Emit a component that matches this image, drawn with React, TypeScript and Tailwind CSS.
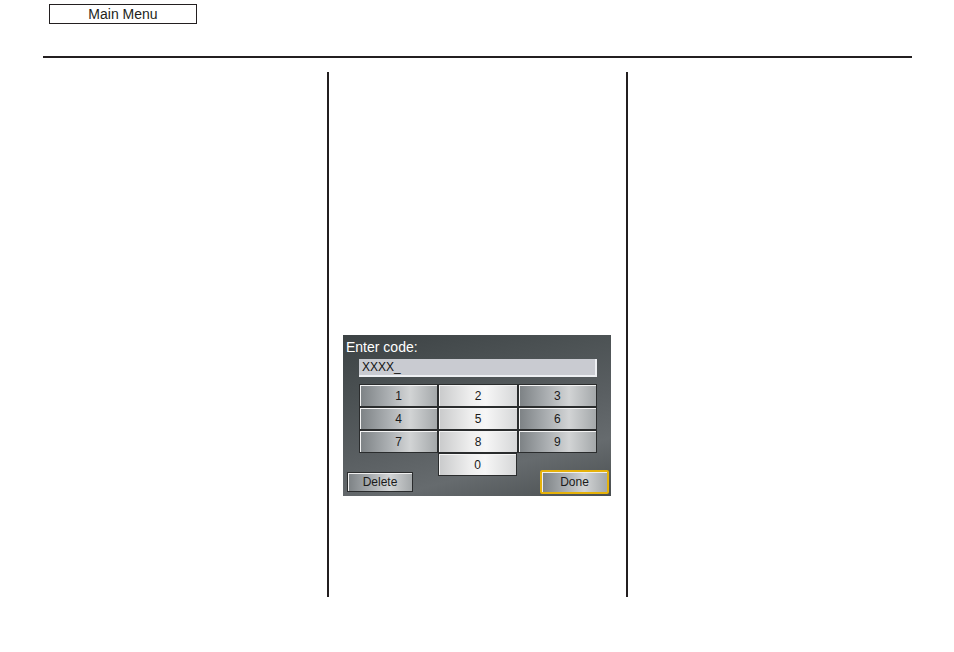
import React from 'react';

const font = { fontFamily: '"Liberation Sans", Arial, sans-serif' };

const darkKey =
  'bg-[linear-gradient(90deg,#7c8184_0%,#a9adb0_35%,#d2d4d5_65%,#a4a8aa_100%)]';
const lightKey =
  'bg-[linear-gradient(90deg,#c9cacb_0%,#eeeeee_40%,#f6f6f6_60%,#d6d7d8_100%)]';

const keys: { label: string; light: boolean }[] = [
  { label: '1', light: false },
  { label: '2', light: true },
  { label: '3', light: false },
  { label: '4', light: false },
  { label: '5', light: true },
  { label: '6', light: false },
  { label: '7', light: false },
  { label: '8', light: true },
  { label: '9', light: false },
];

const Key = ({ label, light }: { label: string; light: boolean }) => (
  <div
    className={`h-[23px] flex items-center justify-center border border-[#2a2c2d] shadow-[inset_1px_1px_0_#f4f4f4] text-[12px] text-[#1a1a1a] ${
      light ? lightKey : darkKey
    }`}
  >
    {label}
  </div>
);

const CodeScreen = () => (
  <div
    className="w-[268px] h-[161px] flex flex-col bg-[linear-gradient(165deg,#3c4244_0%,#4c5254_30%,#5a5f62_55%,#666b6e_75%,#4a4f51_100%)]"
    style={font}
  >
    <div className="pt-[4px] pl-[3px] h-[20px] text-[14px] leading-[16px] text-white">
      Enter code:
    </div>
    <div className="mt-[4px] ml-[16px] w-[238px] h-[18px] bg-[#c9cbd1] border-b-2 border-r-2 border-[#eef0f3] pl-[3px] text-[12px] leading-[17px] text-[#111]">
      XXXX_
    </div>
    <div className="mt-[7px] ml-[16px] w-[238px] grid grid-cols-3">
      {keys.map((k) => (
        <Key key={k.label} label={k.label} light={k.light} />
      ))}
    </div>
    <div className="flex items-start">
      <div
        className={`ml-[4px] mt-[19px] w-[66px] h-[20px] flex items-center justify-center border border-[#2a2c2d] shadow-[inset_1px_1px_0_#f0f0f0] text-[12px] text-[#1a1a1a] ${darkKey}`}
      >
        Delete
      </div>
      <div className="ml-[25px] w-[79px]">
        <Key label="0" light={true} />
      </div>
      <div className="ml-[23px] mt-[17px] w-[69px] h-[24px] border-2 border-[#e6b20a] rounded-[2px]">
        <div
          className={`w-full h-full flex items-center justify-center shadow-[inset_1px_1px_0_#f0f0f0] text-[12px] text-[#1a1a1a] ${darkKey}`}
        >
          Done
        </div>
      </div>
    </div>
  </div>
);

export default function App() {
  return (
    <div className="w-[954px] h-[652px] bg-white flex flex-col" style={font}>
      <div className="pt-[4px] pl-[49px]">
        <div className="w-[148px] h-[20px] border border-[#231f20] flex items-center justify-center text-[14px] text-[#231f20]">
          Main Menu
        </div>
      </div>
      <div className="mt-[32px] ml-[43px] w-[869px] h-[2px] bg-[#231f20]" />
      <div className="mt-[14px] flex h-[525px]">
        <div className="w-[327px]" />
        <div className="w-[2px] bg-[#231f20]" />
        <div className="w-[297px] pl-[14px] pt-[263px]">
          <CodeScreen />
        </div>
        <div className="w-[2px] bg-[#231f20]" />
        <div className="flex-1" />
      </div>
    </div>
  );
}
